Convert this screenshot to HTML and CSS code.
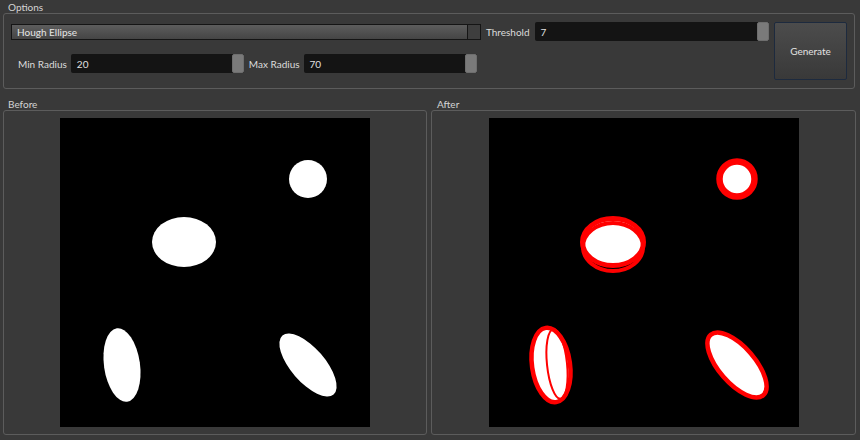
FILE: index.html
```html
<!DOCTYPE html>
<html>
<head>
<meta charset="utf-8">
<link rel="stylesheet" href="styles.css">
</head>
<body>
<div class="app">
  <section class="group options">
    <div class="title">Options</div>
    <div class="box opts">
      <div class="fields">
        <div class="row r1">
          <div class="combo"><span>Hough Ellipse</span><i class="drop"></i></div>
          <span class="lbl">Threshold</span>
          <div class="spin thr"><span>7</span><i class="handle"></i></div>
        </div>
        <div class="row r2">
          <span class="lbl">Min Radius</span>
          <div class="spin rad"><span>20</span><i class="handle"></i></div>
          <span class="lbl">Max Radius</span>
          <div class="spin rad"><span>70</span><i class="handle"></i></div>
        </div>
      </div>
      <button class="gen">Generate</button>
    </div>
  </section>
  <div class="views">
    <section class="group view before">
      <div class="title">Before</div>
      <div class="box pic">
        <svg width="310" height="309" viewBox="0 0 310 309">
          <rect width="310" height="309" fill="#000"/>
          <g fill="#fff">
            <circle cx="248" cy="61" r="19"/>
            <ellipse cx="124" cy="124" rx="32" ry="25"/>
            <ellipse cx="62" cy="247" rx="18" ry="37" transform="rotate(-8 62 247)"/>
            <ellipse cx="248" cy="247" rx="39" ry="17" transform="rotate(49 248 247)"/>
          </g>
        </svg>
      </div>
    </section>
    <section class="group view after">
      <div class="title">After</div>
      <div class="box pic">
        <svg width="310" height="309" viewBox="0 0 310 309">
          <rect width="310" height="309" fill="#000"/>
          <g fill="#fff">
            <circle cx="248" cy="61" r="19"/>
            <ellipse cx="124" cy="124" rx="32" ry="25"/>
            <ellipse cx="62" cy="247" rx="18" ry="37" transform="rotate(-8 62 247)"/>
            <ellipse cx="248" cy="247" rx="39" ry="17" transform="rotate(49 248 247)"/>
          </g>
          <g fill="none" stroke="#ff0000">
            <circle cx="248" cy="61" r="17.5" stroke-width="6.5"/>
            <ellipse cx="124" cy="129" rx="30" ry="24" stroke-width="4"/>
            <ellipse cx="124" cy="124" rx="30.5" ry="23.5" stroke-width="5"/>
            <ellipse cx="62" cy="247" rx="19" ry="37.5" stroke-width="4.5" transform="rotate(-8 62 247)"/>
            <ellipse cx="68" cy="246" rx="10" ry="35" stroke-width="2" transform="rotate(-6 68 246)"/>
            <ellipse cx="248" cy="247" rx="40" ry="18" stroke-width="4.5" transform="rotate(49 248 247)"/>
          </g>
        </svg>
      </div>
    </section>
  </div>
</div>
</body>
</html>
```
FILE: styles.css
```css
* { box-sizing: border-box; }
html, body {
  margin: 0;
  padding: 0;
  background: #393939;
}
body {
  font-family: "Lato", "Liberation Sans", sans-serif;
  font-size: 10px;
  color: #dcdcdc;
  width: 860px;
  height: 440px;
  overflow: hidden;
}
.app {
  padding: 0 0 0 3px;
}
.title {
  height: 13px;
  line-height: 13px;
  padding-left: 5px;
  padding-top: 1px;
  color: #d4d4d4;
}
.box {
  border: 1px solid #5c5c5c;
  border-radius: 3px;
}
.opts {
  width: 852px;
  height: 76px;
  display: flex;
  align-items: flex-start;
  padding: 8px 6px 0 7px;
  gap: 5px;
}
.fields {
  display: flex;
  flex-direction: column;
  gap: 13px;
  width: 758px;
}
.row {
  display: flex;
  align-items: center;
  height: 19px;
}
.lbl {
  white-space: nowrap;
}
.r1 .lbl { margin: 0 5px 0 5px; }
.r2 { padding-left: 7px; }
.r2 .lbl { margin-right: 4px; }
.r2 .spin + .lbl { margin-left: 5px; }
.combo {
  width: 471px;
  height: 16px;
  border: 1px solid #151515;
  background: linear-gradient(#5d5d5d, #454545);
  display: flex;
  align-items: center;
  padding-left: 5px;
  color: #e6e6e6;
}
.combo span { flex: 1; }
.combo .drop {
  width: 13px;
  height: 100%;
  border-left: 1px solid #151515;
  background: #3e3e3e;
}
.spin {
  height: 19px;
  background: #141414;
  border-radius: 2px;
  display: flex;
  align-items: center;
  padding-left: 6px;
  color: #e0e0e0;
}
.spin span { flex: 1; }
.spin .handle {
  width: 12px;
  height: 100%;
  background: #7a7a7a;
  border: 1px solid #6e6e6e;
  border-radius: 2px;
}
.thr { width: 235px; }
.rad { width: 173px; }
.gen {
  width: 73px;
  height: 58px;
  font: inherit;
  color: #e2e2e2;
  background: linear-gradient(#4c4c4c, #393939);
  border: 1px solid #1d2a3e;
  border-radius: 2px;
  padding: 0;
}
.views {
  display: flex;
  gap: 4px;
  margin-top: 8px;
}
.before { width: 424px; }
.after { width: 425px; }
.after .title { padding-left: 6px; }
.pic {
  height: 325px;
  display: flex;
  align-items: center;
  justify-content: center;
}
.pic svg { display: block; }
```
